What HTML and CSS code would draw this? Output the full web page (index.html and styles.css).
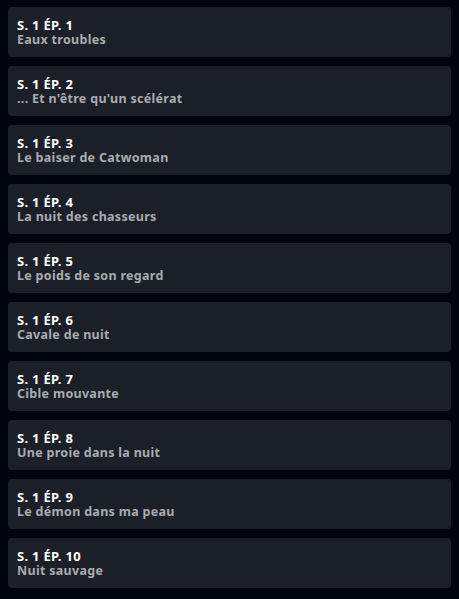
FILE: index.html
```html
<!DOCTYPE html>
<html lang="fr">
<head>
    <meta charset="UTF-8">
    <meta name="viewport" content="width=device-width, initial-scale=1.0">
    <title>Épisodes</title>
    <link rel="stylesheet" href="styles.css">
</head>
<body>

<ul class="episode-list">
    <li class="episode">
        <span class="episode-number">S. 1 ÉP. 1</span>
        <span class="episode-title">Eaux troubles</span>
    </li>
    <li class="episode">
        <span class="episode-number">S. 1 ÉP. 2</span>
        <span class="episode-title">... Et n'être qu'un scélérat</span>
    </li>
    <li class="episode">
        <span class="episode-number">S. 1 ÉP. 3</span>
        <span class="episode-title">Le baiser de Catwoman</span>
    </li>
    <li class="episode">
        <span class="episode-number">S. 1 ÉP. 4</span>
        <span class="episode-title">La nuit des chasseurs</span>
    </li>
    <li class="episode">
        <span class="episode-number">S. 1 ÉP. 5</span>
        <span class="episode-title">Le poids de son regard</span>
    </li>
    <li class="episode">
        <span class="episode-number">S. 1 ÉP. 6</span>
        <span class="episode-title">Cavale de nuit</span>
    </li>
    <li class="episode">
        <span class="episode-number">S. 1 ÉP. 7</span>
        <span class="episode-title">Cible mouvante</span>
    </li>
    <li class="episode">
        <span class="episode-number">S. 1 ÉP. 8</span>
        <span class="episode-title">Une proie dans la nuit</span>
    </li>
    <li class="episode">
        <span class="episode-number">S. 1 ÉP. 9</span>
        <span class="episode-title">Le démon dans ma peau</span>
    </li>
    <li class="episode">
        <span class="episode-number">S. 1 ÉP. 10</span>
        <span class="episode-title">Nuit sauvage</span>
    </li>
</ul>

</body>
</html>
```

FILE: styles.css
```css
body {
    margin: 0;
    padding: 7px 8px;
    background-color: #00050d;
    font-family: "Noto Sans", Arial, sans-serif;
}
.episode-list {
    list-style: none;
    margin: 0;
    padding: 0;
    display: flex;
    flex-direction: column;
    gap: 9px;
}
.episode {
    height: 50px;
    box-sizing: border-box;
    padding: 10.5px 9px 0;
    background-color: #1b1f27;
    border-radius: 4px;
    display: flex;
    flex-direction: column;
}
.episode-number {
    font-size: 13px;
    font-weight: bold;
    letter-spacing: 0.3px;
    line-height: 15px;
    color: #ffffff;
}
.episode-title {
    font-size: 12.5px;
    font-weight: bold;
    letter-spacing: 0.3px;
    line-height: 14px;
    color: #a9acb1;
}
```
